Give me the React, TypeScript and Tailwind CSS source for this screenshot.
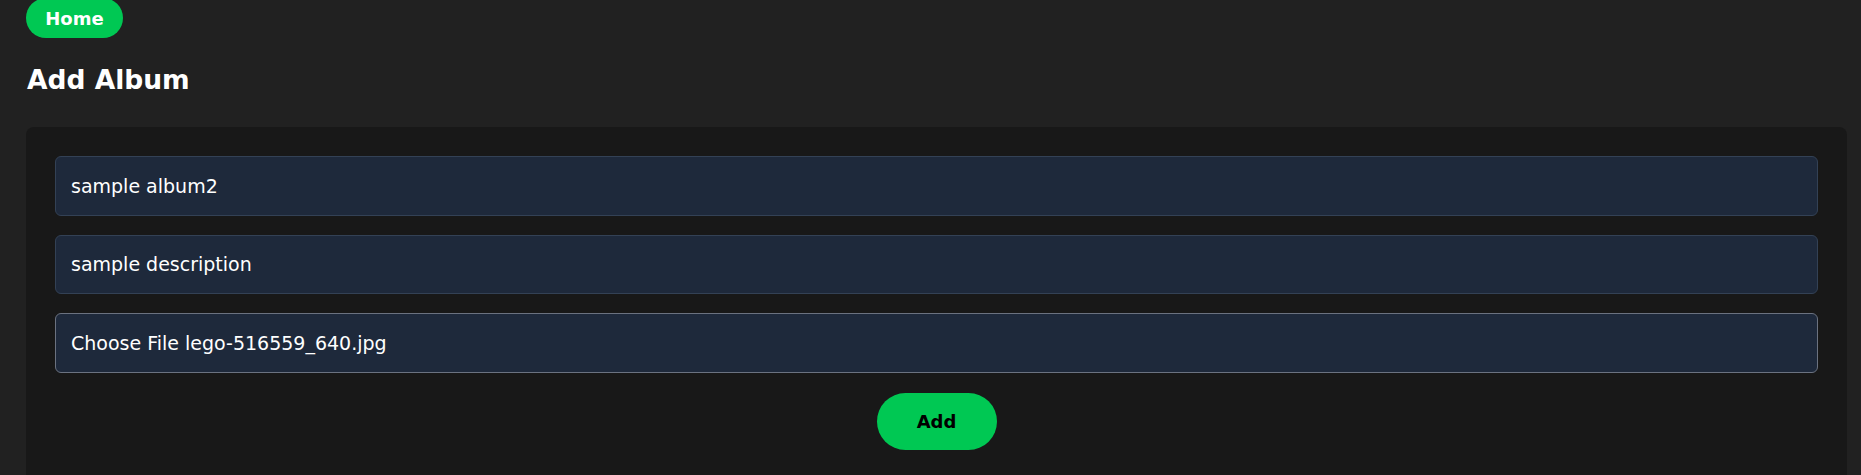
import React from "react";

const font = { fontFamily: '"DejaVu Sans", "Open Sans", sans-serif' };

function Field({ text, focused }: { text: string; focused?: boolean }) {
  return (
    <div
      className={`flex h-[59.5px] items-center rounded-[6px] border bg-[#1e293b] px-[15px] text-[19px] text-white ${
        focused ? "border-[#6b7280]" : "border-[#334155]"
      }`}
    >
      {text}
    </div>
  );
}

export default function App() {
  return (
    <div className="min-h-screen bg-[#212121] pl-[26px] pr-[14px]" style={font}>
      <button className="-mt-[2px] flex h-[40px] w-[97px] items-center justify-center rounded-full bg-[#00c853] text-[18px] font-bold text-white">
        Home
      </button>
      <h1 className="mt-[26px] pl-[1px] text-[26.5px] font-bold leading-[32px] text-white">
        Add Album
      </h1>
      <div className="mt-[31px] h-[400px] rounded-[8px] bg-[#181818] px-[29px] pt-[29px]">
        <div className="flex flex-col gap-[19px]">
          <Field text="sample album2" />
          <Field text="sample description" />
          <Field text="Choose File lego-516559_640.jpg" focused />
        </div>
        <div className="mt-[20px] flex justify-center">
          <button className="flex h-[57px] w-[120px] items-center justify-center rounded-full bg-[#00c853] text-[18px] font-bold text-black">
            Add
          </button>
        </div>
      </div>
    </div>
  );
}
